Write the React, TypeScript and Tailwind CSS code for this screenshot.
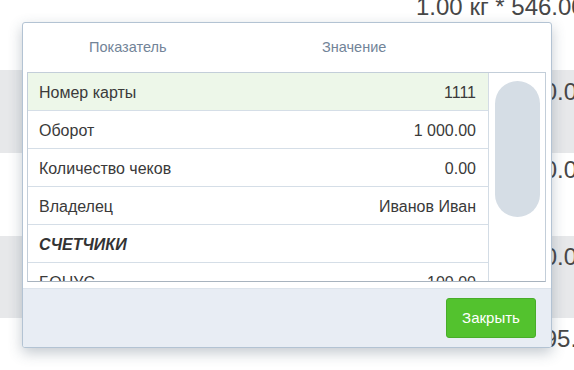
import React from "react";

const rows: { label: string; value: string; bold?: boolean; active?: boolean }[] = [
  { label: "Номер карты", value: "1111", active: true },
  { label: "Оборот", value: "1 000.00" },
  { label: "Количество чеков", value: "0.00" },
  { label: "Владелец", value: "Иванов Иван" },
  { label: "СЧЕТЧИКИ", value: "", bold: true },
  { label: "БОНУС", value: "100.00" },
];

export default function App() {
  return (
    <div className="relative w-[574px] h-[370px] overflow-hidden bg-white font-['Liberation_Sans',Arial,sans-serif] text-[#474747]">
      {/* background page */}
      <div className="flex flex-col">
        <div className="h-[70px] bg-white pl-[416px]">
          <div className="mt-[-5px] whitespace-nowrap text-[24px] leading-[24px]">1.00 кг * 546.00</div>
        </div>
        <div className="h-[83px] bg-[#e7e8ea] pl-[517px] pt-[10px]">
          <div className="whitespace-nowrap text-[24px] leading-[24px]">100.00</div>
        </div>
        <div className="h-[83px] bg-white pl-[517px] pt-[5px]">
          <div className="whitespace-nowrap text-[24px] leading-[24px]">100.00</div>
        </div>
        <div className="h-[82px] bg-[#e7e8ea] pl-[517px] pt-[9px]">
          <div className="whitespace-nowrap text-[24px] leading-[24px]">100.00</div>
        </div>
        <div className="h-[52px] bg-white pl-[517px] pt-[9px]">
          <div className="whitespace-nowrap text-[24px] leading-[24px]">1095.00</div>
        </div>
      </div>

      {/* modal */}
      <div className="absolute left-[22px] top-[22px] flex h-[326px] w-[530px] flex-col overflow-hidden rounded-[3px] border border-[#b3c3d3] bg-white shadow-[0_5px_14px_rgba(60,80,100,0.3)]">
        <div className="flex h-[49px] shrink-0 items-center text-[14.5px] text-[#728498]">
          <div className="w-[299px] pl-[66px]">Показатель</div>
          <div>Значение</div>
        </div>
        <div className="ml-[4px] flex h-[210px] w-[519px] shrink-0 overflow-hidden border border-[#c3ced9] border-b-[#a8b3be]">
          <div className="flex w-[461px] flex-col overflow-hidden border-r border-[#d3dce5]">
            {rows.map((r) => (
              <div
                key={r.label}
                className={`flex h-[38px] shrink-0 items-center justify-between border-b border-[#d5dee7] pl-[11px] pr-[12px] pt-[2px] text-[16px] text-[#3a3a3a] ${r.active ? "bg-[#edf7e9]" : "bg-white"}`}
              >
                <span className={r.bold ? "font-bold italic text-[#333]" : ""}>{r.label}</span>
                <span>{r.value}</span>
              </div>
            ))}
          </div>
          <div className="flex-1 bg-white pl-[6px] pr-[5px] pt-[8px]">
            <div className="h-[136px] w-full rounded-full bg-[#d5dde5]" />
          </div>
        </div>
        <div className="mt-[6px] flex flex-1 items-center justify-end border-t border-[#dde4ec] bg-[#e8edf4] pr-[15px]">
          <button className="h-[40px] w-[90px] rounded-[3px] border border-[#48ad29] bg-[#53c22e] text-[15px] text-white">
            Закрыть
          </button>
        </div>
      </div>
    </div>
  );
}
